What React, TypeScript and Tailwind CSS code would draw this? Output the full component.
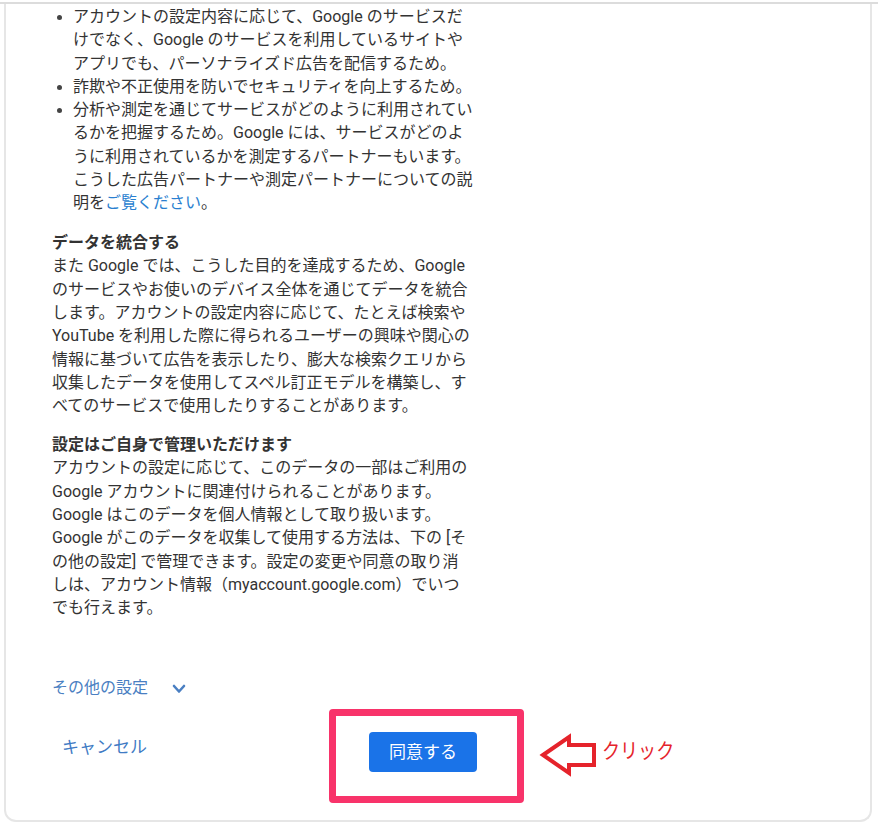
export default function App() {
  const line = "block whitespace-nowrap";
  return (
    <div className="relative w-[878px] h-[832px] bg-white font-[Roboto,'Noto_Sans_CJK_JP',sans-serif] text-[#333333] overflow-hidden">
      <div className="h-[2px] mt-[2px] bg-[#dcdcdc]" />
      <div className="relative ml-[4px] w-[868px] h-[818px] border-x-2 border-b-2 border-[#e6e6e6] rounded-b-[12px]">
        <div className="pt-[1px] pl-[46px] text-[16px] leading-[23.3px]">
          <div>
            {[
              [
                "アカウントの設定内容に応じて、Google のサービスだ",
                "けでなく、Google のサービスを利用しているサイトや",
                "アプリでも、パーソナライズド広告を配信するため。",
              ],
              ["詐欺や不正使用を防いでセキュリティを向上するため。"],
              [
                "分析や測定を通じてサービスがどのように利用されてい",
                "るかを把握するため。Google には、サービスがどのよ",
                "うに利用されているかを測定するパートナーもいます。",
                "こうした広告パートナーや測定パートナーについての説",
              ],
            ].map((item, i) => (
              <div key={i} className="flex">
                <div className="w-[21px] h-[23.3px] pl-[5px] flex items-center">
                  <span className="block w-[5px] h-[5px] rounded-full bg-[#444444] mt-[1px]" />
                </div>
                <div>
                  {item.map((t, j) => (
                    <span key={j} className={line}>
                      {t}
                    </span>
                  ))}
                  {i === 2 && (
                    <span className={line}>
                      明を<span className="text-[#2a7fd0]">ご覧ください</span>。
                    </span>
                  )}
                </div>
              </div>
            ))}
          </div>

          <div className="mt-[16.5px]">
            <span className={line + " font-bold"}>データを統合する</span>
            {[
              "また Google では、こうした目的を達成するため、Google",
              "のサービスやお使いのデバイス全体を通じてデータを統合",
              "します。アカウントの設定内容に応じて、たとえば検索や",
              "YouTube を利用した際に得られるユーザーの興味や関心の",
              "情報に基づいて広告を表示したり、膨大な検索クエリから",
              "収集したデータを使用してスペル訂正モデルを構築し、す",
              "べてのサービスで使用したりすることがあります。",
            ].map((t, i) => (
              <span key={i} className={line}>
                {t}
              </span>
            ))}
          </div>

          <div className="mt-[15.5px]">
            <span className={line + " font-bold"}>設定はご自身で管理いただけます</span>
            {[
              "アカウントの設定に応じて、このデータの一部はご利用の",
              "Google アカウントに関連付けられることがあります。",
              "Google はこのデータを個人情報として取り扱います。",
              "Google がこのデータを収集して使用する方法は、下の [そ",
              "の他の設定] で管理できます。設定の変更や同意の取り消",
              "しは、アカウント情報（myaccount.google.com）でいつ",
              "でも行えます。",
            ].map((t, i) => (
              <span key={i} className={line}>
                {t}
              </span>
            ))}
          </div>

          <div className="mt-[59px] flex items-center h-[20px] text-[16px] leading-[20px] text-[#4a7fc2]">
            <span>その他の設定</span>
            <svg className="ml-[24px] mt-[1px]" width="14" height="10" viewBox="0 0 14 10">
              <path d="M2 2 L7 7.5 L12 2" fill="none" stroke="#4a7fc2" strokeWidth="2.6" strokeLinecap="round" strokeLinejoin="round" />
            </svg>
          </div>

          <div className="mt-[34px] flex h-[40px]">
            <div className="w-[317px] pl-[10px] pt-[4px] text-[17px] leading-[22px] text-[#3f7bc4]">キャンセル</div>
            <div className="w-[108px] h-[40px] rounded-[4px] bg-[#1a73e8] text-white text-[17px] flex items-center justify-center">
              同意する
            </div>
          </div>
        </div>

        <div className="absolute left-[323px] top-[705px] w-[195px] h-[94px] border-[7px] border-[#f8336a] rounded-[4px]" />
        <svg className="absolute left-[531px] top-[727px]" width="62" height="48" viewBox="0 0 62 48">
          <path d="M6 24 L32 6 L32 14 L57 14 L57 34 L32 34 L32 42 Z" fill="white" stroke="#e5232b" strokeWidth="4" strokeLinejoin="miter" />
        </svg>
        <span className="absolute left-[596px] top-[733px] text-[21px] leading-[28px] text-[#e5232b] whitespace-nowrap origin-left scale-x-[0.86] inline-block">
          クリック
        </span>
      </div>
    </div>
  );
}
